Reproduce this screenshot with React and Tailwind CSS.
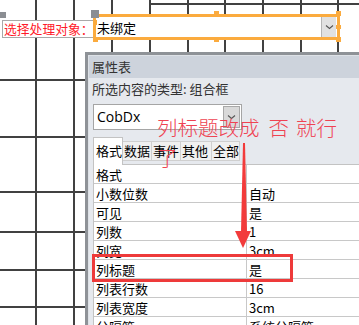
import React from 'react';

const vLines = [36, 74, 112, 150, 188, 225, 263, 301, 338];
const hLines = [80, 137, 192, 232, 270, 307];

const rows = [
    { label: '格式', value: '' },
    { label: '小数位数', value: '自动' },
    { label: '可见', value: '是' },
    { label: '列数', value: '1' },
    { label: '列宽', value: '3cm' },
    { label: '列标题', value: '是' },
    { label: '列表行数', value: '16' },
    { label: '列表宽度', value: '3cm' },
    { label: '分隔符', value: '系统分隔符' },
];

const tabs = [
    { name: '格式', w: 'w-[30px]' },
    { name: '数据', w: 'w-[29px]' },
    { name: '事件', w: 'w-[29px]' },
    { name: '其他', w: 'w-[31px]' },
    { name: '全部', w: 'w-[28px]' },
];

const Handle = ({ className }) => <div className={`absolute bg-[#fbab3e] ${className}`} />;

const App = () => {
    return (
        <div className="relative w-[359px] h-[325px] overflow-hidden bg-white text-[13px] text-[#1a1a1a] font-['Microsoft_YaHei','Noto_Sans_CJK_SC',sans-serif]">
            {/* design grid */}
            <svg className="absolute inset-0" width="359" height="325">
                {vLines.map((x) => (
                    <line key={x} x1={x} y1="0" x2={x} y2="325" stroke="#414141" strokeWidth="2" />
                ))}
                {hLines.map((y) => (
                    <line key={y} x1="0" y1={y} x2="359" y2={y} stroke="#414141" strokeWidth="2" />
                ))}
                <line x1="150" y1="4" x2="359" y2="4" stroke="#414141" strokeWidth="2" />
            </svg>

            {/* top controls */}
            <div className="relative flex items-start pt-[14px] h-[52px]">
                <div className="relative mt-[6px] ml-[2px] w-[92px] h-[18px] bg-white border border-[#a9a9a9] flex items-center pl-px leading-none whitespace-nowrap text-[12.8px] text-[#ff1a2a]">
                    选择处理对象：
                </div>
                <div className="relative ml-[-1px] w-[247px] h-[26px] bg-white border-[3px] border-[#fbab3e] flex items-center">
                    <span className="pl-[1px] leading-none text-black">未绑定</span>
                    <div className="ml-auto mr-px w-[15px] h-[20px] bg-[#e1e1e1] border-l border-[#b5b5b5] flex items-center justify-center">
                        <svg width="9" height="6" viewBox="0 0 9 6">
                            <path d="M1 1.5 L4.5 4.5 L8 1.5" fill="none" stroke="#555" strokeWidth="1.1" />
                        </svg>
                    </div>
                    <Handle className="left-[118px] top-[-6px] w-[5px] h-[4px]" />
                    <Handle className="left-[118px] bottom-[-5px] w-[5px] h-[4px]" />
                    <Handle className="right-[-4px] top-[-6px] w-[5px] h-[5px]" />
                    <Handle className="right-[-4px] top-[8px] w-[5px] h-[4px]" />
                    <Handle className="right-[-4px] bottom-[-5px] w-[5px] h-[5px]" />
                    <Handle className="left-[-2px] top-[3px] w-[3px] h-[5px]" />
                    <Handle className="left-[-3px] bottom-[-5px] w-[5px] h-[5px]" />
                </div>
                <div className="absolute left-0 top-[12px] w-[6px] h-[6px] bg-[#8b8e93]" />
                <div className="absolute left-[91px] top-[10px] w-[8px] h-[8px] bg-[#8b8e93]" />
            </div>

            {/* property sheet */}
            <div className="relative ml-[85px] h-[273px] overflow-hidden border-l-[3px] border-t-[3px] border-[#8e9297]">
                <div className="h-full border-l border-t border-[#dde1e6] bg-[#e6e9ee]">
                    <div className="h-[22px] bg-[#cdd3dc] flex items-center pl-[3px] text-[#333]">属性表</div>
                    <div className="h-[22px] flex items-center pl-[3px] text-[#333]">所选内容的类型: 组合框</div>
                    <div className="mt-[4px] ml-[4px] w-[149px] h-[26px] bg-white border border-[#a5a5a5] flex items-center">
                        <span className="pl-[3px] text-[14px] leading-none text-black font-['Open_Sans',sans-serif]">CobDx</span>
                        <div className="ml-auto mr-px w-[17px] h-[22px] bg-[#d9d9d9] border border-[#a8a8a8] flex items-center justify-center">
                            <svg width="9" height="6" viewBox="0 0 9 6">
                                <path d="M1 1.5 L4.5 4.5 L8 1.5" fill="none" stroke="#555" strokeWidth="1.1" />
                            </svg>
                        </div>
                    </div>
                    <div className="mt-[7px] ml-[4px] flex items-start h-[27px]">
                        {tabs.map((tab, i) =>
                            i === 0 ? (
                                <div key={tab.name} className={`${tab.w} h-[28px] bg-white border border-b-0 border-[#c3c3c3] pl-[2px] pt-[3px] leading-[20px] relative text-black`}>
                                    {tab.name}
                                </div>
                            ) : (
                                <div key={tab.name} className={`${tab.w} mt-[4px] h-[20px] bg-[#f0f0f0] border border-l-0 border-[#cfcfcf] flex items-center pl-[1px] text-black`}>
                                    {tab.name}
                                </div>
                            )
                        )}
                    </div>
                    <div className="ml-[4px] bg-white border-l border-t border-[#c3c3c3]">
                        {rows.map((row) => (
                            <div key={row.label} className="flex h-[19px] border-b border-[#c8c8c8] text-black">
                                <div className="w-[153px] border-r border-[#c8c8c8] pl-[2px] leading-[19px]">{row.label}</div>
                                <div className="pl-[2px] leading-[19px]">{row.value}</div>
                            </div>
                        ))}
                    </div>
                </div>
            </div>

            {/* annotations */}
            <div className="absolute z-20 left-[157px] top-[112px] text-[20.5px] leading-[30px] text-[#ef4352] font-['Noto_Sans_CJK_SC',sans-serif] font-light whitespace-nowrap">
                <span>列标题改成</span>
                <span className="ml-[9px]">否</span>
                <span className="ml-[7px]">就行</span>
                <br />
                <span>了</span>
            </div>
            <svg className="absolute z-20 left-0 top-0" width="359" height="325">
                <polygon points="243,143 245,143 247,232 241,232" fill="#f23b3b" />
                <polygon points="235,231 251,231 243,248" fill="#f23b3b" />
            </svg>
            <div className="absolute z-20 left-[92px] top-[254px] w-[201px] h-[28px] border-[3px] border-[#ee3a3a]" />
        </div>
    );
};

export default App;
